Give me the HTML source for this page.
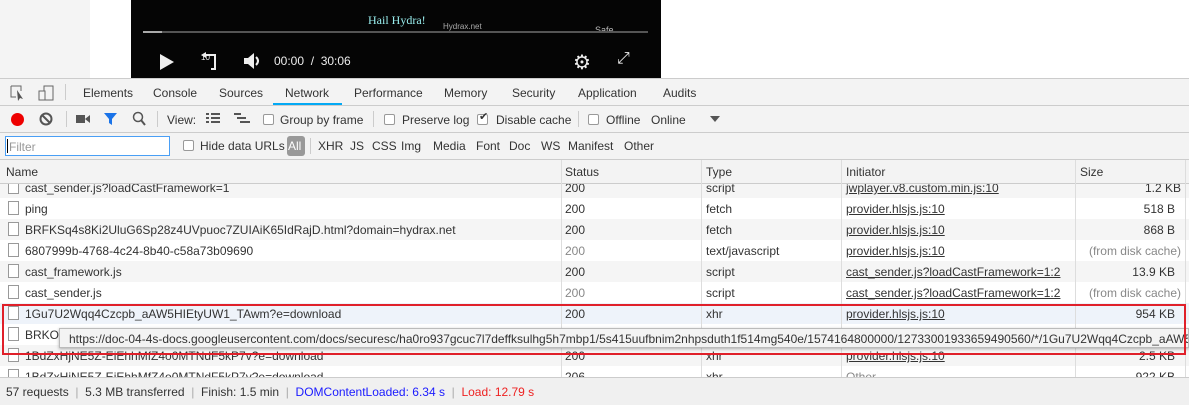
<!DOCTYPE html>
<html><head><meta charset="utf-8"><style>
*{box-sizing:border-box;margin:0;padding:0}
body{width:1189px;height:405px;overflow:hidden;position:relative;background:#fff;font-family:"Liberation Sans",sans-serif;font-size:12px;color:#333}
.a{position:absolute;white-space:nowrap}
.cb{position:absolute;width:11px;height:11px;border:1px solid #999;background:#fff;border-radius:2px}
.row{position:absolute;left:0;width:1189px;height:21px;overflow:hidden}
.row span{position:absolute;top:4px;white-space:nowrap}
.ic{position:absolute;left:8px;top:3px;width:11px;height:14px;border:1px solid #999;background:#fff}
u{color:#333}
.vl{position:absolute;top:160px;height:217px;width:1px;background:#ddd}
</style></head><body>
<div class="a" style="left:0;top:0;width:90px;height:78px;background:#f4f4f4"></div>
<div class="a" style="left:131px;top:0;width:530px;height:78px;background:#050505"></div>
<div class="a" style="left:368px;top:13px;color:#9ee;font-family:'Liberation Serif',serif;font-size:12px">Hail Hydra!</div>
<div class="a" style="left:443px;top:22px;color:#aaa;font-size:8px">Hydrax.net</div>
<div class="a" style="left:595px;top:25px;color:#bbb;font-size:9px">Safe</div>
<div class="a" style="left:143px;top:31px;width:505px;height:2px;background:#555"></div>
<div class="a" style="left:143px;top:31px;width:19px;height:2px;background:#aaa"></div>
<svg class="a" style="left:158px;top:53px" width="18" height="18"><path d="M2 1L16 9L2 17Z" fill="#eee"/></svg>
<div class="a" style="left:201px;top:53px;color:#eee;font-size:8px">10</div>
<svg class="a" style="left:199px;top:52px" width="20" height="20"><path d="M6 3H16V17H12" stroke="#eee" stroke-width="2" fill="none"/><path d="M2 3L7 0V6Z" fill="#eee"/></svg>
<svg class="a" style="left:243px;top:52px" width="20" height="18"><path d="M1 6H5L11 1V17L5 12H1Z" fill="#eee"/><path d="M13 5Q17 9 13 13" stroke="#eee" stroke-width="2" fill="none"/></svg>
<div class="a" style="left:274px;top:54px;color:#eee;font-size:12px">00:00 &nbsp;/ &nbsp;30:06</div>
<div class="a" style="left:573px;top:50px;color:#eee;font-size:20px">⚙</div>
<div class="a" style="left:617px;top:50px;color:#eee;font-size:16px">⤢</div>
<div class="a" style="left:0;top:78px;width:1189px;height:82px;background:#f3f3f3;border-top:1px solid #ccc"></div>
<div class="a" style="left:0;top:105px;width:1189px;height:1px;background:#ccc"></div>
<div class="a" style="left:0;top:132px;width:1189px;height:1px;background:#ccc"></div>
<div class="a" style="left:0;top:159px;width:1189px;height:1px;background:#ccc"></div>
<svg class="a" style="left:10px;top:84px" width="46" height="18"><path d="M1 2H11V7M1 2V13H6" stroke="#666" fill="none"/><path d="M7 6L13 15L10 14L8 17Z" fill="#555"/><rect x="34" y="2" width="9" height="14" fill="none" stroke="#666"/><rect x="29" y="7" width="6" height="9" fill="#f3f3f3" stroke="#666"/></svg>
<div class="a" style="left:65px;top:84px;width:1px;height:16px;background:#ccc"></div>
<div class="a" style="left:83px;top:86px">Elements</div>
<div class="a" style="left:153px;top:86px">Console</div>
<div class="a" style="left:219px;top:86px">Sources</div>
<div class="a" style="left:285px;top:86px">Network</div>
<div class="a" style="left:273px;top:103px;width:69px;height:2px;background:#03a9f4"></div>
<div class="a" style="left:354px;top:86px">Performance</div>
<div class="a" style="left:444px;top:86px">Memory</div>
<div class="a" style="left:512px;top:86px">Security</div>
<div class="a" style="left:578px;top:86px">Application</div>
<div class="a" style="left:663px;top:86px">Audits</div>
<div class="a" style="left:11px;top:113px;width:13px;height:13px;border-radius:50%;background:#e00"></div>
<svg class="a" style="left:39px;top:112px" width="14" height="14"><circle cx="7" cy="7" r="5.5" stroke="#555" stroke-width="2" fill="none"/><path d="M3 3L11 11" stroke="#555" stroke-width="2"/></svg>
<div class="a" style="left:66px;top:111px;width:1px;height:16px;background:#ccc"></div>
<svg class="a" style="left:76px;top:113px" width="14" height="12"><rect x="0" y="2" width="9" height="8" fill="#555"/><path d="M9 6L14 2V10Z" fill="#555"/></svg>
<svg class="a" style="left:104px;top:112px" width="13" height="14"><path d="M0 1H13L8 7V13L5 11V7Z" fill="#1a73e8"/></svg>
<svg class="a" style="left:132px;top:111px" width="14" height="15"><circle cx="6" cy="6" r="4.5" stroke="#555" stroke-width="1.5" fill="none"/><path d="M9 9L13 14" stroke="#555" stroke-width="2"/></svg>
<div class="a" style="left:157px;top:111px;width:1px;height:16px;background:#ccc"></div>
<div class="a" style="left:167px;top:113px">View:</div>
<svg class="a" style="left:206px;top:113px" width="14" height="11"><path d="M0 1H3M5 1H14M0 5H3M5 5H14M0 9H3M5 9H14" stroke="#555" stroke-width="2"/></svg>
<svg class="a" style="left:234px;top:113px" width="16" height="11"><path d="M0 1H7M3 5H12M6 9H16" stroke="#555" stroke-width="2"/></svg>
<div class="cb" style="left:263px;top:114px"></div><div class="a" style="left:280px;top:113px">Group by frame</div>
<div class="a" style="left:373px;top:111px;width:1px;height:16px;background:#ccc"></div>
<div class="cb" style="left:384px;top:114px"></div><div class="a" style="left:402px;top:113px">Preserve log</div>
<div class="cb" style="left:477px;top:114px"></div><div class="a" style="left:479px;top:110px;font-size:11px">✔</div><div class="a" style="left:496px;top:113px">Disable cache</div>
<div class="a" style="left:578px;top:111px;width:1px;height:16px;background:#ccc"></div>
<div class="cb" style="left:588px;top:114px"></div><div class="a" style="left:606px;top:113px">Offline</div>
<div class="a" style="left:651px;top:113px">Online</div>
<svg class="a" style="left:710px;top:116px" width="10" height="6"><path d="M0 0H10L5 6Z" fill="#555"/></svg>
<div class="a" style="left:5px;top:136px;width:165px;height:20px;border:1px solid #4a9ff5;background:#fff;padding:3px 0 0 3px;color:#999">Filter</div>
<div class="a" style="left:7px;top:139px;width:1px;height:14px;background:#000"></div>
<div class="cb" style="left:183px;top:140px"></div><div class="a" style="left:200px;top:139px">Hide data URLs</div>
<div class="a" style="left:287px;top:136px;width:18px;height:20px;background:#999;border-radius:3px;color:#fff;padding:3px 0 0 1px">All</div>
<div class="a" style="left:310px;top:138px;width:1px;height:16px;background:#ccc"></div>
<div class="a" style="left:318px;top:139px">XHR</div>
<div class="a" style="left:350px;top:139px">JS</div>
<div class="a" style="left:372px;top:139px">CSS</div>
<div class="a" style="left:401px;top:139px">Img</div>
<div class="a" style="left:433px;top:139px">Media</div>
<div class="a" style="left:476px;top:139px">Font</div>
<div class="a" style="left:509px;top:139px">Doc</div>
<div class="a" style="left:541px;top:139px">WS</div>
<div class="a" style="left:568px;top:139px">Manifest</div>
<div class="a" style="left:624px;top:139px">Other</div>
<div class="row" style="top:177px;background:#f5f5f5"><div class="ic"></div><span style="left:25px">cast_sender.js?loadCastFramework=1</span><span style="left:565px">200</span><span style="left:706px">script</span><span style="left:846px"><u>jwplayer.v8.custom.min.js:10</u></span><span style="right:8px">1.2 KB</span></div>
<div class="a" style="left:0;top:160px;width:1189px;height:24px;background:#f3f3f3;border-bottom:1px solid #ccc"></div>
<div class="a" style="left:6px;top:165px">Name</div>
<div class="a" style="left:565px;top:165px">Status</div>
<div class="a" style="left:706px;top:165px">Type</div>
<div class="a" style="left:846px;top:165px">Initiator</div>
<div class="a" style="left:1080px;top:165px">Size</div>
<div class="row" style="top:198px"><div class="ic"></div><span style="left:25px">ping</span><span style="left:565px">200</span><span style="left:706px">fetch</span><span style="left:846px"><u>provider.hlsjs.js:10</u></span><span style="right:14px">518 B</span></div>
<div class="row" style="top:219px;background:#f5f5f5"><div class="ic"></div><span style="left:25px">BRFKSq4s8Ki2UluG6Sp28z4UVpuoc7ZUIAiK65IdRajD.html?domain=hydrax.net</span><span style="left:565px">200</span><span style="left:706px">fetch</span><span style="left:846px"><u>provider.hlsjs.js:10</u></span><span style="right:14px">868 B</span></div>
<div class="row" style="top:240px"><div class="ic"></div><span style="left:25px">6807999b-4768-4c24-8b40-c58a73b09690</span><span style="left:565px;color:#888">200</span><span style="left:706px">text/javascript</span><span style="left:846px"><u>provider.hlsjs.js:10</u></span><span style="right:8px;color:#888">(from disk cache)</span></div>
<div class="row" style="top:261px;background:#f5f5f5"><div class="ic"></div><span style="left:25px">cast_framework.js</span><span style="left:565px">200</span><span style="left:706px">script</span><span style="left:846px"><u>cast_sender.js?loadCastFramework=1:2</u></span><span style="right:14px">13.9 KB</span></div>
<div class="row" style="top:282px"><div class="ic"></div><span style="left:25px">cast_sender.js</span><span style="left:565px;color:#888">200</span><span style="left:706px">script</span><span style="left:846px"><u>cast_sender.js?loadCastFramework=1:2</u></span><span style="right:8px;color:#888">(from disk cache)</span></div>
<div class="row" style="top:303px;background:#eef3fa"><div class="ic"></div><span style="left:25px">1Gu7U2Wqq4Czcpb_aAW5HIEtyUW1_TAwm?e=download</span><span style="left:565px">200</span><span style="left:706px">xhr</span><span style="left:846px"><u>provider.hlsjs.js:10</u></span><span style="right:14px">954 KB</span></div>
<div class="row" style="top:324px"><div class="ic"></div><span style="left:25px">BRKOS</span></div>
<div class="row" style="top:345px;background:#f5f5f5"><div class="ic"></div><span style="left:25px">1BdZxHjNE5Z-EiEhhMfZ4o0MTNdF5kP7v?e=download</span><span style="left:565px">200</span><span style="left:706px">xhr</span><span style="left:846px"><u>provider.hlsjs.js:10</u></span><span style="right:14px">2.5 KB</span></div>
<div class="row" style="top:366px;height:11px"><div class="ic"></div><span style="left:25px">1BdZxHjNE5Z-EiEhhMfZ4o0MTNdF5kP7v?e=download</span><span style="left:565px">206</span><span style="left:706px">xhr</span><span style="left:846px;color:#888">Other</span><span style="right:14px">922 KB</span></div>
<div class="vl" style="left:561px"></div><div class="vl" style="left:701px"></div><div class="vl" style="left:841px"></div><div class="vl" style="left:1075px"></div><div class="vl" style="left:1185px"></div>
<div class="a" style="left:59px;top:328px;width:1130px;height:20px;background:#f3f3f3;border:1px solid #bbb;padding:3px 0 0 9px;overflow:hidden;box-shadow:0 1px 3px rgba(0,0,0,.3)">https://doc-04-4s-docs.googleusercontent.com/docs/securesc/ha0ro937gcuc7l7deffksulhg5h7mbp1/5s415uufbnim2nhpsduth1f514mg540e/1574164800000/12733001933659490560/*/1Gu7U2Wqq4Czcpb_aAW5HIEtyUW1</div>
<div class="a" style="left:2px;top:304px;width:1184px;height:51px;border:2px solid #e0202a"></div>
<div class="a" style="left:0;top:377px;width:1189px;height:28px;background:#f0f0f0;border-top:1px solid #ccc"></div>
<div class="a" style="left:6px;top:385px">57 requests <span style="color:#aaa">&nbsp;|&nbsp;</span> 5.3 MB transferred <span style="color:#aaa">&nbsp;|&nbsp;</span> Finish: 1.5 min <span style="color:#aaa">&nbsp;|&nbsp;</span> <span style="color:#1a1aff">DOMContentLoaded: 6.34 s</span> <span style="color:#aaa">&nbsp;|&nbsp;</span> <span style="color:#e22">Load: 12.79 s</span></div>
</body></html>
